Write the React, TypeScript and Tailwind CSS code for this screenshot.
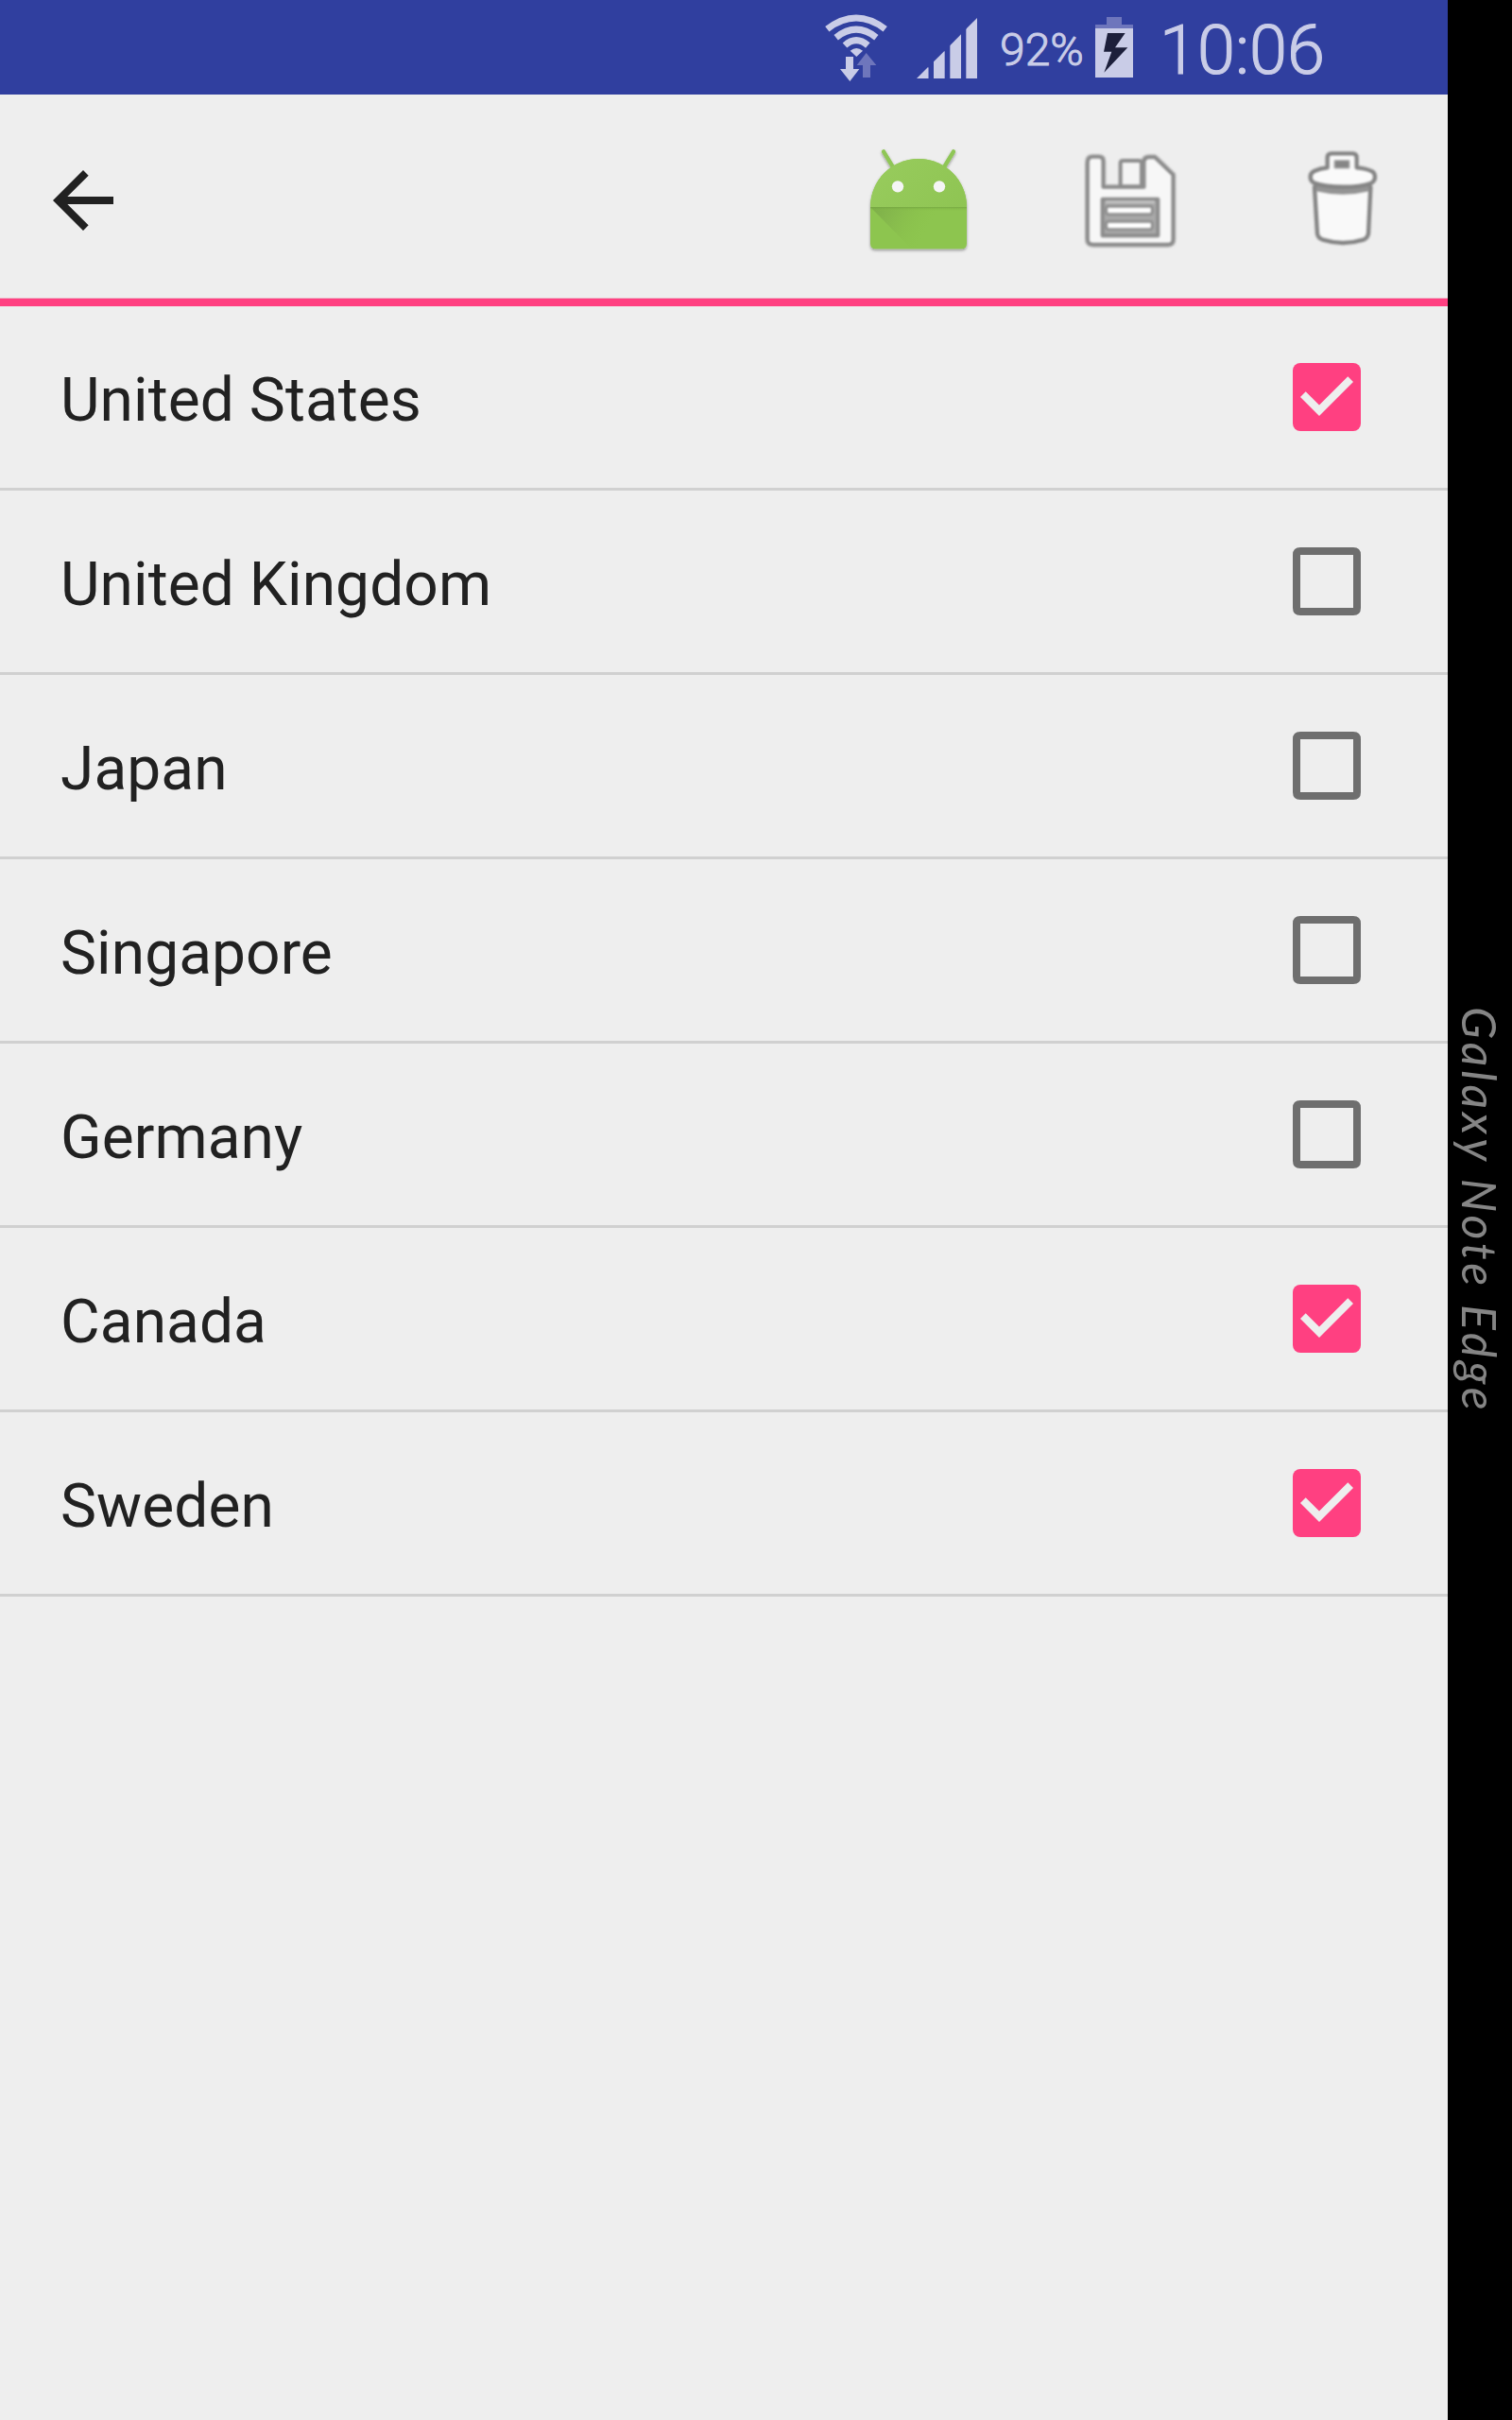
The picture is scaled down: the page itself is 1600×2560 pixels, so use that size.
import React from "react";

const countries = [
  { name: "United States", checked: true },
  { name: "United Kingdom", checked: false },
  { name: "Japan", checked: false },
  { name: "Singapore", checked: false },
  { name: "Germany", checked: false },
  { name: "Canada", checked: true },
  { name: "Sweden", checked: true },
];

function WifiIcon() {
  return (
    <svg className="h-[100px] w-[80px]" viewBox="0 0 240 300" fill="none">
      <g stroke="#c9cce7" strokeWidth="21">
        <path d="M46 92Q138 22 230 92" />
        <path d="M74 119Q138 68 202 119" />
        <path d="M102 144Q138 112 175 144" />
      </g>
      <path d="M119 161Q139 145 159 161L139 180Z" fill="#c9cce7" />
      <path d="M105 180H129V219H148L118 258L87 219H105Z" fill="#c9cce7" />
      <path d="M170 168L202 207H183V246H159V207H140Z" fill="#6e76bc" />
    </svg>
  );
}

function SignalIcon() {
  return (
    <svg className="h-[100px] w-[66px]" viewBox="324 0 198 300">
      <g fill="#8188c6">
        <path d="M366 215L369 212V249H366Z" />
        <path d="M417 164L420 161V249H417Z" />
        <path d="M435 145H439V249H435Z" />
        <path d="M486 93H490V249H486Z" />
      </g>
      <g fill="#c9cce7">
        <path d="M330 249L366 213V249Z" />
        <path d="M384 249V196L418 162V249Z" />
        <path d="M437 249V143L471 109V249Z" />
        <path d="M488 249V91L522 57V249Z" />
      </g>
    </svg>
  );
}

function BatteryIcon() {
  return (
    <svg className="h-[100px] w-[40px]" viewBox="57 0 120 300">
      <path d="M93 54H141V78H177V90H57V78H93Z" fill="#6e76bc" />
      <path d="M57 90H177V246H57Z" fill="#c9cce7" />
      <path d="M96 105H152L120 151H160L85 230L109 164H84Z" fill="#1c1f3b" />
    </svg>
  );
}

function AndroidIcon() {
  return (
    <svg className="size-[140px]" viewBox="0 0 420 420">
      <defs>
        <linearGradient id="bodyShade" x1="70" y1="237" x2="230" y2="330" gradientUnits="userSpaceOnUse">
          <stop offset="0" stopColor="#7dae49" />
          <stop offset="0.4" stopColor="#85b84c" stopOpacity="0.8" />
          <stop offset="1" stopColor="#8bc34a" stopOpacity="0" />
        </linearGradient>
        <linearGradient id="seamShade" x1="0" y1="237" x2="0" y2="250" gradientUnits="userSpaceOnUse">
          <stop offset="0" stopColor="#6f9f3e" stopOpacity="0.7" />
          <stop offset="1" stopColor="#8bc34a" stopOpacity="0" />
        </linearGradient>
        <linearGradient id="headShade" x1="100" y1="100" x2="340" y2="300" gradientUnits="userSpaceOnUse">
          <stop offset="0" stopColor="#97cb5c" />
          <stop offset="1" stopColor="#8ec452" />
        </linearGradient>
        <filter id="softShadow" x="-20%" y="-20%" width="140%" height="140%">
          <feDropShadow dx="0" dy="5" stdDeviation="4" floodColor="#000" floodOpacity="0.38" />
        </filter>
      </defs>
      <g filter="url(#softShadow)">
        <path d="M105 61L136 112M327 61L296 112" stroke="#8fc657" strokeWidth="13" strokeLinecap="round" />
        <path d="M63 237C63 151 132 84 216 84S369 151 369 237V353Q369 370 352 370H80Q63 370 63 353Z" fill="#8dc550" />
      </g>
      <path d="M63 237C63 151 132 84 216 84S369 151 369 237Z" fill="url(#headShade)" />
      <path d="M63 237H369V330L300 370H194Z" fill="url(#bodyShade)" />
      <path d="M63 237H369V250H63Z" fill="url(#seamShade)" />
      <circle cx="150" cy="172" r="18.5" fill="#f5f5f5" />
      <circle cx="282" cy="172" r="18.5" fill="#f5f5f5" />
    </svg>
  );
}

function SaveIcon() {
  return (
    <svg className="size-[140px]" viewBox="0 0 420 420">
      <g className="blur-[3px]" strokeLinejoin="round">
        <path d="M63 97Q63 78 78 78H98Q112 78 112 92V174H242V95Q242 79 258 79H276L334 135V340Q334 356 318 356H80Q63 356 63 340Z" fill="none" stroke="#b4b4b4" strokeWidth="18" />
        <path d="M63 97Q63 78 78 78H98Q112 78 112 92V174H242V95Q242 79 258 79H276L334 135V340Q334 356 318 356H80Q63 356 63 340Z" fill="#f7f7f7" stroke="#8a8a8a" strokeWidth="11" />
        <path d="M167 172V98Q167 90 175 90H225Q234 90 234 98V172Z" fill="#f4f4f4" stroke="#8c8c8c" strokeWidth="12" />
        <path d="M237 92V175" stroke="#8e8e8e" strokeWidth="17" />
        <rect x="110" y="212" width="176" height="116" fill="#a9a9a9" stroke="#8c8c8c" strokeWidth="12" />
        <path d="M120 221H276" stroke="#c5c5c5" strokeWidth="8" />
        <rect x="122" y="235" width="146" height="25" rx="7" fill="#fff" stroke="#909090" strokeWidth="9" />
        <rect x="122" y="283" width="146" height="25" rx="7" fill="#fff" stroke="#909090" strokeWidth="9" />
      </g>
    </svg>
  );
}

function TrashIcon() {
  return (
    <svg className="size-[140px]" viewBox="0 0 420 420">
      <g className="blur-[3px]" stroke="#848484" strokeWidth="13" strokeLinejoin="round">
        <path d="M93 174L102 322Q104 335 120 341Q183 361 248 341Q261 336 264 322L271 174Z" fill="#f9f9f9" />
        <path d="M99 177Q183 197 265 177" fill="none" stroke="#949494" strokeWidth="20" />
        <path d="M134 112V80Q134 67 147 67H214Q227 67 227 80V112Q257 114 276 124Q285 129 285 142Q285 155 273 161Q240 173 183 173Q127 173 92 161Q80 155 80 142Q80 129 92 123Q110 114 134 112Z" fill="#fafafa" />
        <rect x="156" y="89" width="48" height="25" fill="#858585" stroke="#b5b5b5" strokeWidth="3" />
      </g>
    </svg>
  );
}

function Checkbox({ checked }: { checked: boolean }) {
  if (!checked) {
    return (
      <svg className="size-[72px]" viewBox="0 0 72 72" role="checkbox" aria-checked="false">
        <path fillRule="evenodd" d="M8 0H64Q72 0 72 8V64Q72 72 64 72H8Q0 72 0 64V8Q0 0 8 0ZM8 8V64H64V8Z" fill="#6e6e6e" />
      </svg>
    );
  }
  return (
    <svg className="size-[72px]" viewBox="0 0 72 72" role="checkbox" aria-checked="true">
      <rect width="72" height="72" rx="8" fill="#ff4081" />
      <path d="M8 36L13.7 30.3L28 44.6L58.3 14.3L64 20L28 56Z" fill="#eeeeee" />
    </svg>
  );
}

export default function App() {
  return (
    <div className="flex h-[2560px] w-[1600px] overflow-hidden bg-black font-['Roboto',sans-serif]">
      <main className="flex w-[1532px] flex-col bg-[#eeeeee]">
        <header className="flex h-[100px] shrink-0 items-start bg-[#303f9f] pl-[860px] text-[#c9cce7]">
          <WifiIcon />
          <div className="ml-[28px]">
            <SignalIcon />
          </div>
          <span className="ml-[24px] w-[101px] pt-[25px] text-[48px] leading-[56px] font-light [-webkit-text-stroke:1px_#c9cce7]">92%</span>
          <BatteryIcon />
          <span className="ml-[28px] pt-[12px] text-[72px] leading-[84px] font-light [-webkit-text-stroke:1.2px_#c9cce7]">10:06</span>
        </header>

        <nav className="flex h-[215px] shrink-0 items-start justify-between pt-10 pr-8 pl-[56px]">
          <svg className="mt-[40px] h-[64px] w-[64px]" viewBox="4 4 16 16">
            <path d="M20 11H7.83l5.59-5.59L12 4l-8 8 8 8 1.41-1.41L7.83 13H20v-2z" fill="#212121" />
          </svg>
          <div className="flex gap-[90px]">
            <AndroidIcon />
            <SaveIcon />
            <TrashIcon />
          </div>
        </nav>
        <div className="h-[9px] shrink-0 border-t border-[#eda6be] bg-[#ff4081]" />

        <ul>
          {countries.map((country) => (
            <li
              key={country.name}
              className="flex h-[195px] items-center justify-between border-b-[3px] border-[#d0d0d0] pr-[92px] pl-16"
            >
              <span className="pt-[7px] text-[64px] leading-[76px] tracking-[0.08px] text-[#212121]">{country.name}</span>
              <Checkbox checked={country.checked} />
            </li>
          ))}
        </ul>
      </main>
      <aside className="flex w-[68px] items-center justify-center">
        <span className="[writing-mode:vertical-rl] font-['Lato',sans-serif] text-[50px] leading-[68px] font-normal tracking-[4px] whitespace-nowrap text-[#858585] italic">
          Galaxy Note Edge
        </span>
      </aside>
    </div>
  );
}
